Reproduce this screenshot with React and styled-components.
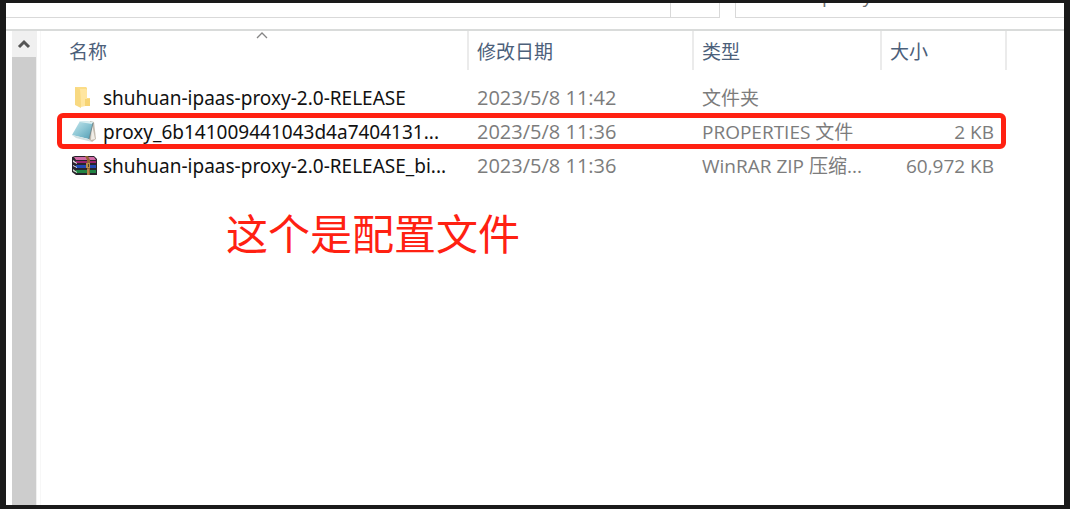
import React from "react";
import styled, { createGlobalStyle } from "styled-components";

const GlobalStyle = createGlobalStyle`
  * { box-sizing: border-box; }
  body {
    margin: 0;
    background: #1a1a1a;
    font-family: "Open Sans", "Noto Sans CJK SC", sans-serif;
    font-size: 19px;
  }
`;

const Frame = styled.div`
  display: flex;
  flex-direction: column;
  min-height: 100vh;
  padding: 3px 6px 4px;
  background: #1a1a1a;
`;

const ExplorerWindow = styled.main`
  display: flex;
  flex: 1;
  flex-direction: column;
  background: #fff;
`;

const Toolbar = styled.header`
  display: flex;
  align-items: flex-end;
  gap: 15px;
  height: 28px;
  padding-bottom: 11px;
  overflow: hidden;
  border-bottom: 2px solid #d9dbda;
`;

const AddressBar = styled.div`
  display: flex;
  flex: 1;
  justify-content: flex-end;
  height: 44px;
  border: 1px solid #d9d9d9;
  border-left: 0;
`;

const RefreshButton = styled.button`
  width: 49px;
  border: 0;
  border-left: 1px solid #d9d9d9;
  background: #fff;
`;

const SearchInput = styled.input`
  flex: 0 0 329px;
  min-width: 0;
  height: 44px;
  padding: 0 0 0 86px;
  border: 1px solid #d9d9d9;
  border-right: 0;
  border-radius: 0;
  background: #fff;
  color: #6d6d6d;
  font: inherit;
`;

const Content = styled.div`
  display: flex;
  flex: 1;
  padding-left: 6px;
`;

const ScrollTrack = styled.div`
  display: flex;
  flex: none;
  flex-direction: column;
  width: 25px;
  border-right: 1px solid #f0f0f0;
  background: #f0f0f0;
`;

const ScrollButton = styled.button`
  display: flex;
  align-items: center;
  justify-content: center;
  height: 26px;
  padding: 0;
  border: 0;
  background: #f0f0f0;
`;

const ScrollThumb = styled.div`
  flex: 1;
  background: #cdcdcd;
`;

const ListPane = styled.section`
  flex: 1;
  min-width: 0;
  margin-left: 3px;
  padding: 0 57px 0 16px;
  border-left: 1px solid #f7f7f7;
`;

const FileTable = styled.table`
  width: 100%;
  table-layout: fixed;
  border-collapse: separate;
  border-spacing: 0;
`;

const Column = styled.col`
  width: ${(p) => p.$width || "auto"};
`;

const HeaderCell = styled.th`
  position: relative;
  height: 39px;
  padding: 0;
  border-right: 2px solid #ebebeb;
  font-weight: 400;
`;

const SortButton = styled.button`
  width: 100%;
  height: 39px;
  padding: 0 0 0 ${(p) => (p.$first ? "12px" : "8px")};
  border: 0;
  background: none;
  color: #4c607a;
  font: inherit;
  text-align: left;
`;

const SortMark = styled.svg`
  position: absolute;
  top: 0;
  right: 0;
  left: 0;
  margin: 0 auto;
`;

const Rows = styled.tbody`
  &::before {
    content: "";
    display: table-row;
    height: 11px;
  }
`;

const Row = styled.tr`
  position: relative;
`;

const Cell = styled.td`
  height: 34px;
  padding: 0 13px 0 8px;
  color: #7c7c7c;
  line-height: 26px;
  text-align: ${(p) => (p.$right ? "right" : "left")};
  white-space: nowrap;
`;

const DateCell = styled(Cell)`
  font-size: 20px;
`;

const NameCell = styled(Cell)`
  padding: 0 0 0 14px;
  color: #111;
  font-family: "Noto Sans", "Noto Sans CJK SC", sans-serif;
`;

const FileName = styled.div`
  display: flex;
  align-items: center;
  gap: 4px;

  svg { flex: none; }
`;

const Highlight = styled.span`
  position: absolute;
  inset: -2px 1px 0 0;
  border: 5px solid #ff2112;
  border-radius: 6px;
  pointer-events: none;
`;

const Note = styled.p`
  margin: 19px 0 0 169px;
  color: #ff2112;
  font-family: "Noto Sans CJK SC", sans-serif;
  font-size: 42px;
  font-weight: 400;
  line-height: 60px;
`;

const FolderIcon = () => (
  <svg width="28" height="26" viewBox="0 0 28 26" aria-hidden="true">
    <path d="M4 2h11l1 1v10h3v8H6z" fill="#fbdc87" />
    <path d="M9 4h6l1 1v9h3v6l-9 2z" fill="#ffe6a0" />
    <path d="M4 2l5 3 1 18-6-3z" fill="#f8d981" />
    <path d="M14 14h5v7h-5z" fill="#f7d474" />
  </svg>
);

const NotepadIcon = () => (
  <svg width="28" height="26" viewBox="0 0 28 26" aria-hidden="true">
    <defs>
      <linearGradient id="cover" x1="0" y1="0" x2="1" y2="1">
        <stop offset="0" stopColor="#c9e8ee" />
        <stop offset=".5" stopColor="#8cc6d4" />
        <stop offset="1" stopColor="#4f9bb2" />
      </linearGradient>
    </defs>
    <path d="M19 2l4 1 2 17-4 3-4-3z" fill="#c3bbaf" />
    <path d="M21 5l3 15-4 1z" fill="#f0ede7" />
    <path d="M9 2l13 1-4 17L1 16z" fill="url(#cover)" />
    <path d="M9 2l13 1-1 2-12-2z" fill="#dceff1" />
    <path d="M1 16l16 4 4 3-16-4z" fill="#cfdfe1" />
    <path d="M22 4l-4 16" stroke="#6d8a92" />
  </svg>
);

const ArchiveIcon = () => (
  <svg width="28" height="26" viewBox="0 0 28 26" aria-hidden="true">
    <path d="M1 4l3-1h19l3 3v16H5l-4-3z" fill="#29242c" />
    <path d="M3 4h20l2 3H5z" fill="#d16ba6" />
    <path d="M5 8h20v2H5z" fill="#9b236d" />
    <path d="M2 7l4 3v1L2 9z" fill="#e4d7df" />
    <path d="M5 12h20v3H5z" fill="#2249b5" />
    <path d="M2 12l4 2v1l-4-2z" fill="#dce1ef" />
    <path d="M5 17h20v3H5z" fill="#218443" />
    <path d="M2 16l4 3v1l-4-2z" fill="#cfdfcf" />
    <path d="M14 3h3l2 4v15h-3V7z" fill="#946233" />
    <path d="M15 10h4v5h-4z" fill="#b98f4b" />
    <path d="M17 11h1v3h-1z" fill="#50422c" />
    <path d="M17 16v6" stroke="#d3a75d" />
  </svg>
);

const columns = ["名称", "修改日期", "类型", "大小"];

const files = [
  {
    name: "shuhuan-ipaas-proxy-2.0-RELEASE",
    date: "2023/5/8 11:42",
    type: "文件夹",
    size: "",
    Icon: FolderIcon,
  },
  {
    name: "proxy_6b141009441043d4a7404131...",
    date: "2023/5/8 11:36",
    type: "PROPERTIES 文件",
    size: "2 KB",
    Icon: NotepadIcon,
    highlighted: true,
  },
  {
    name: "shuhuan-ipaas-proxy-2.0-RELEASE_bi...",
    date: "2023/5/8 11:36",
    type: "WinRAR ZIP 压缩...",
    size: "60,972 KB",
    Icon: ArchiveIcon,
  },
];

export default function App() {
  return (
    <Frame>
      <GlobalStyle />
      <ExplorerWindow>
        <Toolbar>
          <AddressBar>
            <RefreshButton type="button" aria-label="刷新" />
          </AddressBar>
          <SearchInput type="text" aria-label="搜索" defaultValue="proxy" />
        </Toolbar>
        <Content>
          <ScrollTrack>
            <ScrollButton type="button" aria-label="向上滚动">
              <svg width="14" height="10" viewBox="0 0 14 10">
                <path d="M2 8l5-5 5 5" fill="none" stroke="#555" strokeWidth="3" />
              </svg>
            </ScrollButton>
            <ScrollThumb />
          </ScrollTrack>
          <ListPane>
            <FileTable>
              <colgroup>
                <Column />
                <Column $width="225px" />
                <Column $width="188px" />
                <Column $width="125px" />
              </colgroup>
              <thead>
                <tr>
                  {columns.map((label, i) => (
                    <HeaderCell key={label} scope="col">
                      <SortButton type="button" $first={i === 0}>{label}</SortButton>
                      {i === 0 && (
                        <SortMark width="12" height="8" viewBox="0 0 12 8" aria-hidden="true">
                          <path d="M1 7l5-5 5 5" fill="none" stroke="#858585" strokeWidth="1.3" />
                        </SortMark>
                      )}
                    </HeaderCell>
                  ))}
                </tr>
              </thead>
              <Rows>
                {files.map(({ name, date, type, size, Icon, highlighted }) => (
                  <Row key={name}>
                    <NameCell>
                      <FileName>
                        <Icon />
                        {name}
                      </FileName>
                      {highlighted && <Highlight />}
                    </NameCell>
                    <DateCell>{date}</DateCell>
                    <Cell>{type}</Cell>
                    <Cell $right>{size}</Cell>
                  </Row>
                ))}
              </Rows>
            </FileTable>
            <Note>这个是配置文件</Note>
          </ListPane>
        </Content>
      </ExplorerWindow>
    </Frame>
  );
}
